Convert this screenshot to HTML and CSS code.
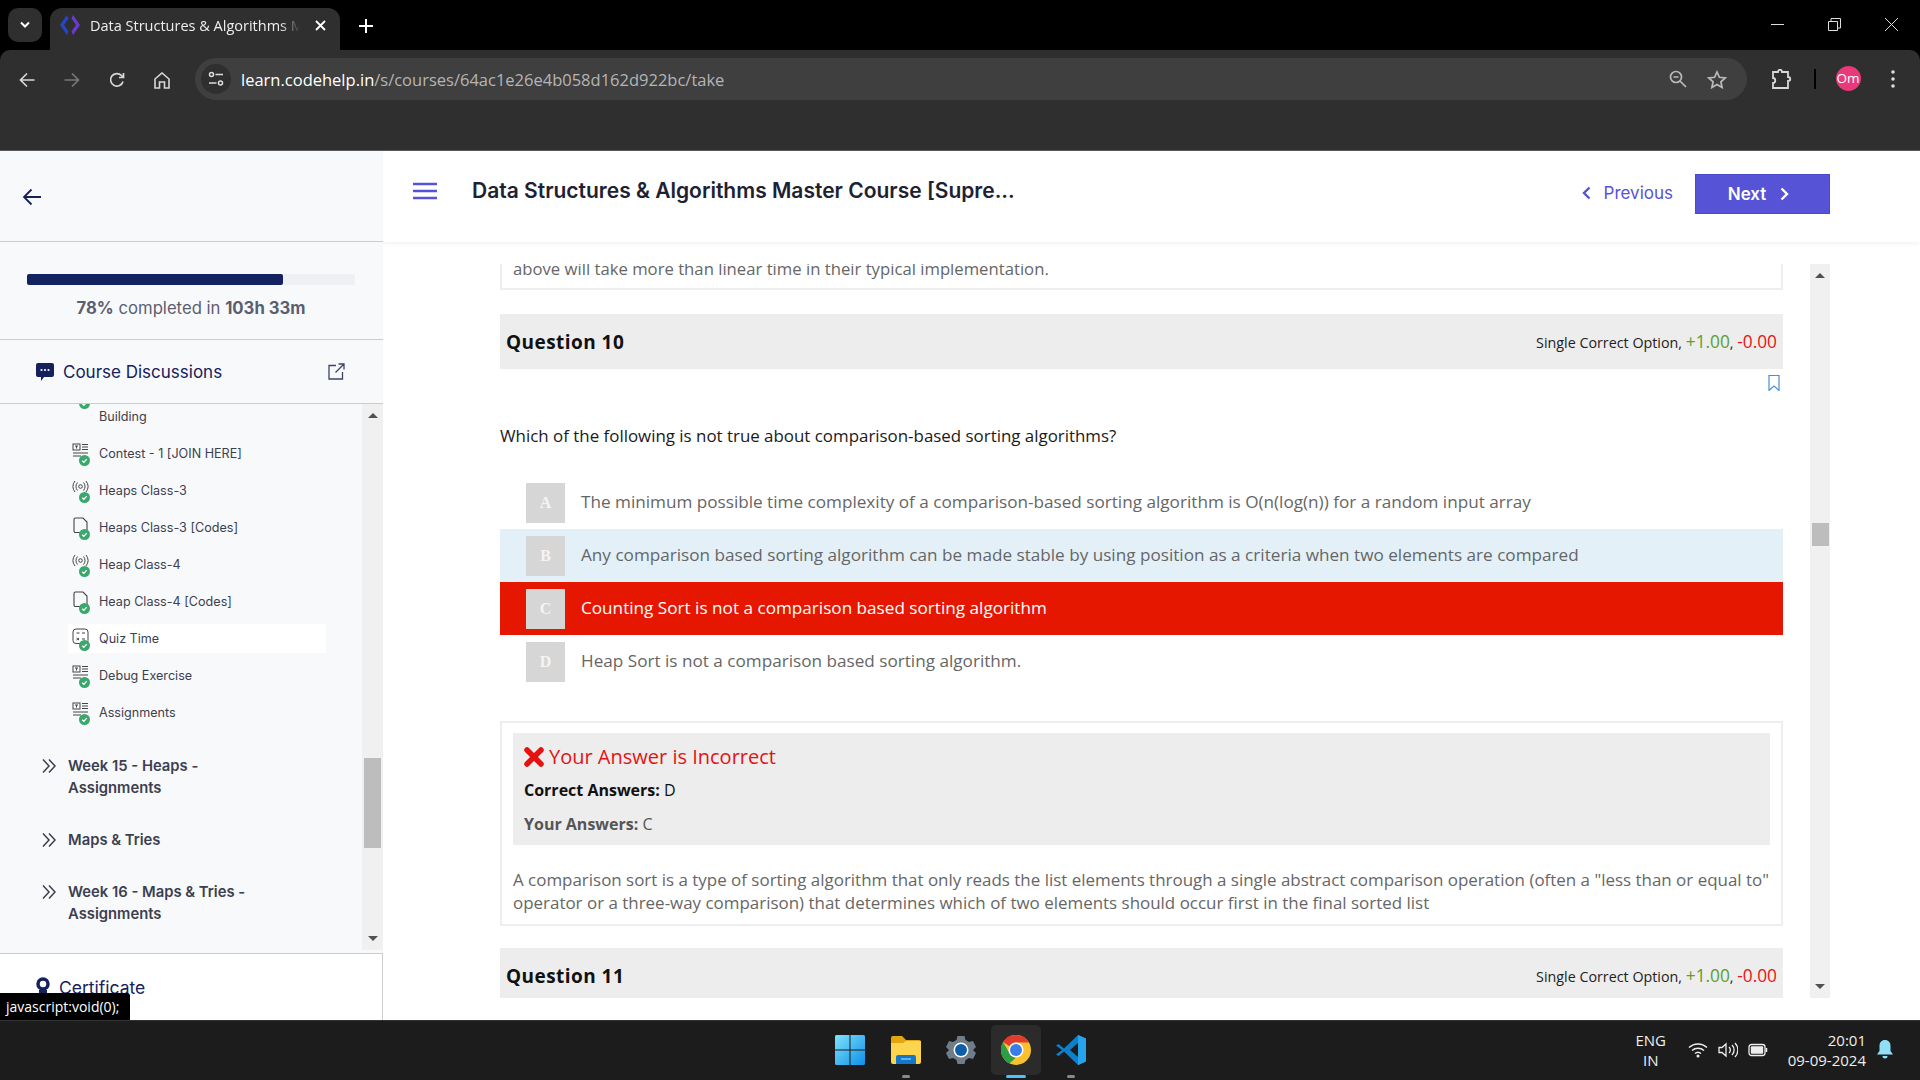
FILE: index.html
```html
<!DOCTYPE html>
<html lang="en">
<head>
    <meta charset="UTF-8">
    <title>Data Structures &amp; Algorithms Master Course</title>
    <link rel="stylesheet" href="styles.css">
</head>
<body>
    <svg class="defs" width="0" height="0">
        <symbol id="check" viewBox="0 0 12 12"><circle cx="6" cy="6" r="6" fill="#3aa76d"/><path d="M3.500 6.200l1.800 1.700 3.200-3.400" fill="none" stroke="#fff" stroke-width="1.400"/></symbol>
        <symbol id="i-exercise" viewBox="0 0 17 17"><g fill="none" stroke="#444" stroke-width="1"><rect x="1" y="1" width="7" height="6"/><path d="M3 3h3M4.500 3v2.500M10 1.500h6M10 4h6M10 6.500h6"/><path d="M1 10h15M1 13h8"/></g></symbol>
        <symbol id="i-live" viewBox="0 0 17 17"><g fill="none" stroke="#444" stroke-width="1"><circle cx="8.500" cy="6.500" r="1.800"/><path d="M5.500 2.500a6 6 0 0 0 0 8M11.500 2.500a6 6 0 0 1 0 8M3 1a9 9 0 0 0 0 11M14 1a9 9 0 0 1 0 11"/></g></symbol>
        <symbol id="i-doc" viewBox="0 0 17 17"><path d="M3.500 1h7.500l4 4v9a1.500 1.500 0 0 1-1.500 1.500h-10a1.500 1.500 0 0 1-1.500-1.500v-11.500a1.500 1.500 0 0 1 1.500-1.500z" fill="none" stroke="#444" stroke-width="1.100"/></symbol>
        <symbol id="i-quiz" viewBox="0 0 17 17"><g fill="none" stroke="#444" stroke-width="1"><rect x="1" y="1" width="15" height="14.500" rx="3"/><path d="M4.500 5h3M10 5h3M4.500 10l2.500 2M7 10l-2.500 2M10 11h3"/></g></symbol>
        <symbol id="i-chev" viewBox="0 0 14 14"><path d="M1 .5l6 6.500-6 6.500M7 .5l6 6.500-6 6.500" fill="none" stroke="#3c3f50" stroke-width="1.500"/></symbol>
    </svg>

    <header class="browser">
        <div class="tab-strip">
            <div class="tab-search"><svg width="12" height="8" viewBox="0 0 12 8"><path d="M2 1.500l4 4 4-4" fill="none" stroke="#fff" stroke-width="2"/></svg></div>
            <div class="tab">
                <svg class="favicon" width="20" height="20" viewBox="0 0 20 20"><path d="M7 0L0 10l7 10 1.500-3.500L4 10l4.500-6.500z" fill="#2447c8"/><path d="M13 0l7 10-7 10-1.500-3.500L16 10l-4.500-6.500z" fill="#6a3bd0"/></svg>
                <span class="tab-title">Data Structures &amp; Algorithms Master Course</span>
                <svg class="tab-close" width="11" height="11" viewBox="0 0 11 11"><path d="M1 1l9 9M10 1l-9 9" stroke="#fff" stroke-width="1.800"/></svg>
            </div>
            <svg class="tab-new" width="14" height="14" viewBox="0 0 14 14"><path d="M7 0v14M0 7h14" stroke="#fff" stroke-width="2"/></svg>
            <div class="window-controls">
                <svg width="13" height="13" viewBox="0 0 13 13"><path d="M0 6.500h13" stroke="#ddd"/></svg>
                <svg width="13" height="13" viewBox="0 0 13 13"><path d="M.5 3.500h9v9h-9zM3 3V.5h9.500V10H10" fill="none" stroke="#ddd"/></svg>
                <svg width="13" height="13" viewBox="0 0 13 13"><path d="M0 0l13 13M13 0L0 13" stroke="#ddd"/></svg>
            </div>
        </div>
        <div class="toolbar">
            <svg class="nav-icon" width="16" height="16" viewBox="0 0 16 16"><path d="M15.500 8H1.500M8 1.500L1.500 8 8 14.500" fill="none" stroke="#d8d8d8" stroke-width="1.700"/></svg>
            <svg class="nav-icon" width="16" height="16" viewBox="0 0 16 16"><path d="M.5 8h14M8 1.500L14.500 8 8 14.500" fill="none" stroke="#777" stroke-width="1.700"/></svg>
            <svg class="nav-icon" width="16" height="16" viewBox="0 0 16 16"><path d="M14 9.500A6.300 6.300 0 1 1 12.500 3.500L14.500 5.500M14.500 1v4.500H10" fill="none" stroke="#d8d8d8" stroke-width="1.700"/></svg>
            <svg class="nav-icon" width="16" height="17" viewBox="0 0 16 17"><path d="M1 7l7-6 7 6v9h-4.500v-6h-5v6H1z" fill="none" stroke="#d8d8d8" stroke-width="1.600"/></svg>
            <div class="omnibox">
                <div class="site-info"><svg width="16" height="16" viewBox="0 0 16 16"><g fill="none" stroke="#ddd" stroke-width="1.500"><circle cx="3.500" cy="3.500" r="2"/><path d="M7.500 3.500H15M1 12h7.500"/><circle cx="12.500" cy="12" r="2"/></g></svg></div>
                <span class="url"><span class="url-host">learn.codehelp.in</span>/s/courses/64ac1e26e4b058d162d922bc/take</span>
                <svg class="omni-icon" width="18" height="18" viewBox="0 0 18 18"><g fill="none" stroke="#bbb" stroke-width="1.700"><circle cx="7" cy="7" r="5.500"/><path d="M11 11l6 6M4.500 7h5"/></g></svg>
                <svg class="omni-icon" width="20" height="19" viewBox="0 0 20 19"><path d="M10 2l2.400 5.300 5.800.6-4.300 3.900 1.200 5.700-5.100-2.900-5.100 2.900 1.200-5.700L1.800 7.900l5.800-.6z" fill="none" stroke="#bbb" stroke-width="1.700"/></svg>
            </div>
            <svg class="puzzle" width="21" height="20" viewBox="0 0 21 20"><path d="M1 3h5c0-3 4-3 4 0h6v5c3 0 3 4 0 4v7H1v-5c3 0 3-5 0-5z" fill="none" stroke="#d8d8d8" stroke-width="1.800"/></svg>
            <span class="toolbar-sep"></span>
            <span class="avatar">Om</span>
            <svg class="kebab" width="4" height="18" viewBox="0 0 4 18"><circle cx="2" cy="2" r="1.800" fill="#ddd"/><circle cx="2" cy="9" r="1.800" fill="#ddd"/><circle cx="2" cy="16" r="1.800" fill="#ddd"/></svg>
        </div>
    </header>

    <div class="page">
        <aside class="sidebar">
            <div class="side-back">
                <svg width="20" height="18" viewBox="0 0 20 18"><path d="M19 9H2M9.500 1.500L2 9l7.500 7.500" fill="none" stroke="#14215c" stroke-width="1.800"/></svg>
            </div>
            <div class="side-progress">
                <div class="progress-track"><div class="progress-fill" style="width: 78%"></div></div>
                <p class="progress-text"><b>78%</b> completed in <b>103h 33m</b></p>
            </div>
            <div class="side-discuss">
                <svg width="18" height="18" viewBox="0 0 18 18"><path d="M2 0h14a2 2 0 0 1 2 2v10a2 2 0 0 1-2 2H8l-3 4v-4H2a2 2 0 0 1-2-2V2a2 2 0 0 1 2-2z" fill="#14215c"/><circle cx="5.500" cy="7" r="1.100" fill="#fff"/><circle cx="9" cy="7" r="1.100" fill="#fff"/><circle cx="12.500" cy="7" r="1.100" fill="#fff"/></svg>
                <span class="discuss-label">Course Discussions</span>
                <svg class="discuss-out" width="17" height="17" viewBox="0 0 17 17"><path d="M8 2.500H1v13.500h13.500V9M7.500 9.500L16 1M10.500 1H16v5.500" fill="none" stroke="#3c4468" stroke-width="1.300"/></svg>
            </div>
            <div class="side-list">
                <div class="lessons">
                    <ul class="lesson-list">
                        <li class="lesson lesson-clipped"><span class="lesson-icon"><svg class="badge"><use href="#check"/></svg></span>Building</li>
                        <li class="lesson"><span class="lesson-icon"><svg class="type"><use href="#i-exercise"/></svg><svg class="badge"><use href="#check"/></svg></span>Contest - 1 [JOIN HERE]</li>
                        <li class="lesson"><span class="lesson-icon"><svg class="type"><use href="#i-live"/></svg><svg class="badge"><use href="#check"/></svg></span>Heaps Class-3</li>
                        <li class="lesson"><span class="lesson-icon"><svg class="type"><use href="#i-doc"/></svg><svg class="badge"><use href="#check"/></svg></span>Heaps Class-3 [Codes]</li>
                        <li class="lesson"><span class="lesson-icon"><svg class="type"><use href="#i-live"/></svg><svg class="badge"><use href="#check"/></svg></span>Heap Class-4</li>
                        <li class="lesson"><span class="lesson-icon"><svg class="type"><use href="#i-doc"/></svg><svg class="badge"><use href="#check"/></svg></span>Heap Class-4 [Codes]</li>
                        <li class="lesson lesson-active"><span class="lesson-icon"><svg class="type"><use href="#i-quiz"/></svg><svg class="badge"><use href="#check"/></svg></span>Quiz Time</li>
                        <li class="lesson"><span class="lesson-icon"><svg class="type"><use href="#i-exercise"/></svg><svg class="badge"><use href="#check"/></svg></span>Debug Exercise</li>
                        <li class="lesson"><span class="lesson-icon"><svg class="type"><use href="#i-exercise"/></svg><svg class="badge"><use href="#check"/></svg></span>Assignments</li>
                    </ul>
                    <div class="week"><svg class="week-chev"><use href="#i-chev"/></svg><span>Week 15 - Heaps -<br>Assignments</span></div>
                    <div class="week"><svg class="week-chev"><use href="#i-chev"/></svg><span>Maps &amp; Tries</span></div>
                    <div class="week"><svg class="week-chev"><use href="#i-chev"/></svg><span>Week 16 - Maps &amp; Tries -<br>Assignments</span></div>
                </div>
                <div class="scrollbar scrollbar-side">
                    <span class="arrow arrow-up"></span>
                    <span class="thumb"></span>
                    <span class="arrow arrow-down"></span>
                </div>
            </div>
            <div class="side-cert">
                <svg width="14" height="18" viewBox="0 0 14 18"><circle cx="7" cy="7" r="5" fill="none" stroke="#14215c" stroke-width="3.500"/><path d="M3 13v5l4-2 4 2v-5z" fill="#14215c"/></svg>
                <span>Certificate</span>
            </div>
            <div class="status-tip">javascript:void(0);</div>
        </aside>

        <main class="main">
            <div class="topbar">
                <svg class="burger" width="24" height="18" viewBox="0 0 24 18"><path d="M0 2h24M0 9h24M0 16h24" stroke="#5653d6" stroke-width="2.600"/></svg>
                <h1 class="course-title">Data Structures &amp; Algorithms Master Course [Supre...</h1>
                <a class="btn-prev"><svg width="10" height="14" viewBox="0 0 10 14"><path d="M8.500 1.500L3 7l5.500 5.500" fill="none" stroke="#5653d6" stroke-width="2.400"/></svg>Previous</a>
                <a class="btn-next">Next<svg width="10" height="14" viewBox="0 0 10 14"><path d="M1.500 1.500L7 7l-5.500 5.500" fill="none" stroke="#fff" stroke-width="2.400"/></svg></a>
            </div>
            <div class="content">
                <div class="questions">
                    <div class="card card-prev">
                        <p>above will take more than linear time in their typical implementation.</p>
                    </div>

                    <div class="q-head">
                        <span class="q-name">Question 10</span>
                        <span class="q-meta">Single Correct Option, <span class="plus">+1.00</span>, <span class="minus">-0.00</span></span>
                    </div>
                    <div class="bookmark-row">
                        <svg width="12" height="16" viewBox="0 0 12 16"><path d="M1 .5h10v15l-5-4.500-5 4.500z" fill="none" stroke="#4a90d9" stroke-width="1.200"/></svg>
                    </div>
                    <p class="q-text">Which of the following is not true about comparison-based sorting algorithms?</p>

                    <div class="options">
                        <div class="option"><span class="letter">A</span>The minimum possible time complexity of a comparison-based sorting algorithm is O(n(log(n)) for a random input array</div>
                        <div class="option option-hover"><span class="letter">B</span>Any comparison based sorting algorithm can be made stable by using position as a criteria when two elements are compared</div>
                        <div class="option option-wrong"><span class="letter">C</span>Counting Sort is not a comparison based sorting algorithm</div>
                        <div class="option"><span class="letter">D</span>Heap Sort is not a comparison based sorting algorithm.</div>
                    </div>

                    <div class="card card-result">
                        <div class="verdict">
                            <div class="verdict-title">
                                <svg width="20" height="20" viewBox="0 0 20 20"><path d="M3 3l14 14M17 3L3 17" stroke="#e61212" stroke-width="5.500" stroke-linecap="round"/></svg>
                                Your Answer is Incorrect
                            </div>
                            <p class="verdict-line"><b>Correct Answers:</b> D</p>
                            <p class="verdict-line verdict-yours"><b>Your Answers:</b> C</p>
                        </div>
                        <p class="explain">A comparison sort is a type of sorting algorithm that only reads the list elements through a single abstract comparison operation (often a "less than or equal to" operator or a three-way comparison) that determines which of two elements should occur first in the final sorted list</p>
                    </div>

                    <div class="q-head q-head-next">
                        <span class="q-name">Question 11</span>
                        <span class="q-meta">Single Correct Option, <span class="plus">+1.00</span>, <span class="minus">-0.00</span></span>
                    </div>
                </div>
                <div class="scrollbar scrollbar-main">
                    <span class="arrow arrow-up"></span>
                    <span class="thumb"></span>
                    <span class="arrow arrow-down"></span>
                </div>
            </div>
        </main>
    </div>

    <footer class="taskbar">
        <div class="task-icons">
            <div class="task-item task-start">
                <svg width="30" height="30" viewBox="0 0 30 30"><defs><linearGradient id="win" x1="0" y1="0" x2="1" y2="1"><stop offset="0" stop-color="#7fe3fb"/><stop offset="1" stop-color="#0f8fe8"/></linearGradient></defs><path d="M0 1.500A1.500 1.500 0 0 1 1.500 0h13v14.500H0zM15.500 0h13A1.500 1.500 0 0 1 30 1.500v13H15.500zM0 15.500h14.500V30h-13A1.500 1.500 0 0 1 0 28.500zM15.500 15.500H30v13a1.500 1.500 0 0 1-1.500 1.500h-13z" fill="url(#win)"/></svg>
            </div>
            <div class="task-item task-open">
                <svg width="30" height="28" viewBox="0 0 30 28"><path d="M0 2a2 2 0 0 1 2-2h9l4 4h13a2 2 0 0 1 2 2v4H0z" fill="#e3a60f"/><path d="M0 7h12l3-2h15v21a2 2 0 0 1-2 2H2a2 2 0 0 1-2-2z" fill="#fdd44e"/><path d="M5 21a2 2 0 0 1 2-2h16a2 2 0 0 1 2 2v7H5z" fill="#1477c9"/><path d="M10 23h10" stroke="#7cc5f5" stroke-width="1.500"/></svg>
            </div>
            <div class="task-item">
                <svg width="30" height="30" viewBox="0 0 30 30"><path d="M11.500 1h7l1 4 3.500 2 4-1 3 6-3 3 3 3-3 6-4-1-3.500 2-1 4h-7l-1-4-3.500-2-4 1-3-6 3-3-3-3 3-6 4 1 3.500-2z" fill="#6f7c8a"/><circle cx="15" cy="15" r="7.500" fill="#fff"/><circle cx="15" cy="15" r="6" fill="#0d5ea8"/></svg>
            </div>
            <div class="task-item task-active">
                <svg width="30" height="30" viewBox="0 0 30 30"><circle cx="15" cy="15" r="15" fill="#fbc02d"/><path d="M15 0a15 15 0 0 1 13 7.500H15a7.500 7.500 0 0 0-6.500 3.750L2 7a15 15 0 0 1 13-7z" fill="#e33b2e"/><path d="M2 7l6.500 11.250A7.500 7.500 0 0 0 15 22.500L8.500 28.500A15 15 0 0 1 2 7z" fill="#2e9e46"/><circle cx="15" cy="15" r="7.500" fill="#fff"/><circle cx="15" cy="15" r="6" fill="#3b7de8"/></svg>
            </div>
            <div class="task-item task-open">
                <svg width="30" height="30" viewBox="0 0 30 30"><path d="M22 0l8 3.500v23L22 30 8 16.500 2.500 21 0 19.500 6 15 0 10.500 2.500 9 8 13.500z" fill="#0f7fcb"/><path d="M22 0l8 3.500v23L22 30z" fill="#27a3ee"/><path d="M22 8l-8 7 8 7z" fill="#1c1c1c"/></svg>
            </div>
        </div>
        <div class="tray">
            <div class="tray-lang">ENG<br>IN</div>
            <svg width="20" height="16" viewBox="0 0 20 16"><g fill="none" stroke="#eee" stroke-width="1.500"><path d="M1 5.500a13 13 0 0 1 18 0M4 8.500a9 9 0 0 1 12 0M7 11.500a4.500 4.500 0 0 1 6 0"/></g><circle cx="10" cy="14" r="1.500" fill="#eee"/></svg>
            <svg width="20" height="16" viewBox="0 0 20 16"><g fill="none" stroke="#eee" stroke-width="1.300"><path d="M1 5.500h3l4-3.500v12l-4-3.500H1z"/><path d="M11 5a4 4 0 0 1 0 6M14 3a7 7 0 0 1 0 10M17 1a10 10 0 0 1 0 14"/></g></svg>
            <svg width="20" height="14" viewBox="0 0 20 14"><rect x="1" y="1.500" width="16" height="11" rx="2.500" fill="none" stroke="#eee" stroke-width="1.300"/><rect x="2.800" y="3.300" width="12.400" height="7.400" rx="1" fill="#eee"/><path d="M18.500 5v4" stroke="#eee" stroke-width="1.500"/></svg>
            <div class="tray-clock">20:01<br>09-09-2024</div>
            <svg class="bell" width="16" height="20" viewBox="0 0 16 20"><path d="M8 0c3.500 0 5.500 2.500 5.500 6v5l2.500 3.500H0L2.500 11V6C2.500 2.500 4.500 0 8 0z" fill="#8fe0f7"/><path d="M5.500 16h5a2.500 2.500 0 0 1-5 0z" fill="#8fe0f7"/></svg>
        </div>
    </footer>
</body>
</html>
```

FILE: styles.css
```css
* {
    margin: 0;
    padding: 0;
    box-sizing: border-box;
}

body {
    width: 1920px;
    height: 1080px;
    overflow: hidden;
    display: flex;
    flex-direction: column;
    font-family: 'Open Sans', sans-serif;
    background-color: #fff;
}

.defs {
    position: absolute;
}

/* browser chrome */
.browser {
    height: 151px;
    background-color: #000;
    flex-shrink: 0;
}

.tab-strip {
    height: 50px;
    display: flex;
    padding-top: 8px;
    position: relative;
}

.tab-search {
    width: 34px;
    height: 34px;
    margin-left: 8px;
    border-radius: 10px;
    background-color: #2f2f2f;
    display: flex;
    align-items: center;
    justify-content: center;
}

.tab {
    width: 290px;
    height: 42px;
    margin-left: 8px;
    padding: 0 9px 8px 10px;
    background-color: #2f2f2f;
    border-radius: 12px 12px 0 0;
    display: flex;
    align-items: center;
}

.favicon {
    flex-shrink: 0;
}

.tab-title {
    width: 210px;
    margin-left: 10px;
    overflow: hidden;
    white-space: nowrap;
    color: #eee;
    font-size: 14.500px;
    -webkit-mask-image: linear-gradient(to right, #000 190px, transparent 210px);
    mask-image: linear-gradient(to right, #000 190px, transparent 210px);
}

.tab-close {
    margin-left: 15px;
    flex-shrink: 0;
}

.tab-new {
    margin: 11px 0 0 19px;
}

.window-controls {
    margin-left: auto;
    display: flex;
    gap: 44px;
    padding: 10px 22px 0 0;
    height: 34px;
}

.toolbar {
    height: 101px;
    background-color: #2f2f2f;
    border-bottom: 1px solid #5a5a5a;
    border-radius: 10px 10px 0 0;
    padding: 8px 0 0 19px;
    display: flex;
    align-items: flex-start;
}

.nav-icon {
    margin: 14px 29px 0 0;
    flex-shrink: 0;
}

.omnibox {
    width: 1552px;
    height: 42px;
    margin-left: -4px;
    border-radius: 21px;
    background-color: #3f3f3f;
    display: flex;
    align-items: center;
    padding-left: 6px;
}

.site-info {
    width: 30px;
    height: 30px;
    border-radius: 50%;
    background-color: #2f2f2f;
    display: flex;
    align-items: center;
    justify-content: center;
    flex-shrink: 0;
}

.url {
    margin-left: 10px;
    font-size: 16.500px;
    color: #b5b5b5;
    flex-grow: 1;
}

.url-host {
    color: #fff;
}

.omni-icon {
    margin-right: 20px;
    flex-shrink: 0;
}

.puzzle {
    margin: 11px 0 0 24.500px;
}

.toolbar-sep {
    width: 2px;
    height: 20px;
    margin: 11px 0 0 21px;
    background-color: #000;
}

.avatar {
    width: 25px;
    height: 25px;
    margin: 8px 0 0 20px;
    border-radius: 50%;
    background-color: #e8397a;
    color: #fff;
    font-size: 13.500px;
    line-height: 25px;
    text-align: center;
}

.kebab {
    margin: 12px 0 0 30px;
}

/* page */
.page {
    flex-grow: 1;
    min-height: 0;
    display: flex;
}

.sidebar {
    width: 383px;
    flex-shrink: 0;
    display: flex;
    flex-direction: column;
    background-color: #f8f9fb;
    position: relative;
    font-family: 'Inter', sans-serif;
}

.side-back {
    height: 91px;
    padding: 37px 0 0 22px;
    border-bottom: 1px solid #ccc;
}

.side-progress {
    height: 98px;
    padding: 32px 28px 0 27px;
    border-bottom: 1px solid #ccc;
}

.progress-track {
    height: 11px;
    border-radius: 2px;
    background-color: #eff0f4;
}

.progress-fill {
    height: 100%;
    border-radius: 2px;
    background-color: #14235f;
}

.progress-text {
    margin-top: 13px;
    text-align: center;
    font-size: 16.700px;
    color: #5a5f70;
}

.side-discuss {
    height: 64px;
    padding: 0 38px 0 36px;
    border-bottom: 1px solid #ccc;
    display: flex;
    align-items: center;
    color: #14215c;
    font-size: 17px;
}

.discuss-label {
    margin-left: 9px;
}

.discuss-out {
    margin-left: auto;
}

.side-list {
    height: 546px;
    display: flex;
    overflow: hidden;
}

.lessons {
    width: 362px;
    overflow: hidden;
}

.lesson-list {
    list-style-type: none;
    margin-top: -2px;
    margin-bottom: 27.500px;
}

.lesson {
    width: 258px;
    height: 29px;
    margin: 0 0 8px 68px;
    padding-left: 31px;
    display: flex;
    align-items: center;
    font-size: 12.600px;
    color: #3c3f50;
    position: relative;
}

.lesson-active {
    background-color: #fff;
}

.lesson-icon {
    position: absolute;
    left: 4px;
    top: 4px;
    width: 18px;
    height: 24px;
}

.lesson-icon .type {
    width: 17px;
    height: 17px;
    display: block;
}

.lesson-icon .badge {
    position: absolute;
    left: 7px;
    top: 12px;
    width: 11px;
    height: 11px;
}

.lesson-clipped .badge {
    top: -8px;
}

.week {
    margin-left: 42px;
    margin-bottom: 30px;
    display: flex;
    font-size: 14.800px;
    font-weight: 600;
    line-height: 22px;
    color: #3c3f50;
}

.week-chev {
    width: 14px;
    height: 14px;
    margin: 4px 12px 0 0;
    flex-shrink: 0;
}

.scrollbar {
    width: 20px;
    display: flex;
    flex-direction: column;
    align-items: center;
    background-color: #f0f0f0;
    position: relative;
    flex-shrink: 0;
}

.arrow {
    width: 0;
    height: 0;
    border-left: 5px solid transparent;
    border-right: 5px solid transparent;
    flex-shrink: 0;
}

.arrow-up {
    border-bottom: 5px solid #505050;
    margin-top: 9px;
}

.arrow-down {
    border-top: 5px solid #505050;
    margin-top: auto;
    margin-bottom: 9px;
}

.thumb {
    width: 17px;
    background-color: #bdbdbd;
}

.scrollbar-side {
    width: 21px;
}

.scrollbar-side .thumb {
    height: 90px;
    margin-top: 340px;
}

.side-cert {
    flex-grow: 1;
    margin-top: 3px;
    background-color: #fff;
    border-top: 1px solid #ccc;
    border-right: 1px solid #ccc;
    padding: 23px 0 0 36px;
    display: flex;
    align-items: flex-start;
    gap: 9px;
    color: #14215c;
    font-size: 17.500px;
}

.status-tip {
    position: absolute;
    left: 0;
    bottom: 0;
    height: 27px;
    width: 130px;
    padding-left: 6px;
    background-color: #000;
    color: #fff;
    font-size: 14px;
    line-height: 27px;
    font-family: 'Open Sans', sans-serif;
    border-radius: 0 3px 0 0;
}

/* main column */
.main {
    flex-grow: 1;
    min-width: 0;
    display: flex;
    flex-direction: column;
}

.topbar {
    height: 91px;
    flex-shrink: 0;
    padding: 0 90px 5px 30px;
    display: flex;
    align-items: center;
    box-shadow: 0 2px 4px rgba(0, 0, 0, 0.05);
}

.burger {
    flex-shrink: 0;
    margin-top: -6px;
}

.course-title {
    margin-left: 35px;
    font-family: 'Inter', sans-serif;
    font-size: 21px;
    font-weight: 600;
    color: #1d2233;
    flex-grow: 1;
    margin-top: -8px;
}

.btn-prev,
.btn-next {
    font-family: 'Inter', sans-serif;
    font-size: 17px;
    display: flex;
    align-items: center;
}

.btn-prev {
    color: #5653d6;
    gap: 13px;
    margin-right: 22px;
    margin-top: -2px;
}

.btn-next {
    width: 135px;
    height: 40px;
    padding-right: 7px;
    justify-content: center;
    gap: 14px;
    background-color: #5653d6;
    border: 1px solid #4c49cc;
    color: #fff;
    font-weight: 600;
}

.content {
    flex-grow: 1;
    min-height: 0;
    padding: 22px 90px 22px 117px;
    display: flex;
    gap: 27px;
}

.questions {
    width: 1283px;
    overflow: hidden;
}

.card {
    border: 2px solid #eee;
}

.card-prev {
    margin-top: -12px;
    height: 38px;
    border-top: none;
    padding: 7px 0 0 11px;
    font-size: 16.700px;
    line-height: 20px;
    color: #666;
}

.q-head {
    height: 55px;
    margin-top: 24px;
    padding: 0 6px;
    background-color: #ededed;
    display: flex;
    align-items: center;
    justify-content: space-between;
}

.q-head-next {
    margin-top: 22px;
}

.q-name {
    font-size: 19px;
    font-weight: 700;
    letter-spacing: 0.450px;
    color: #111;
}

.q-meta {
    font-size: 14.300px;
    color: #222;
}

.plus,
.minus {
    font-size: 17.300px;
}

.plus {
    color: #5aa02c;
}

.minus {
    color: #ee1111;
}

.bookmark-row {
    height: 22px;
    padding: 6px 3px 0 0;
    display: flex;
    justify-content: flex-end;
}

.q-text {
    margin-top: 33px;
    font-size: 16.900px;
    line-height: 24px;
    color: #1a1a1a;
}

.options {
    margin-top: 28px;
}

.option {
    height: 53px;
    padding: 0 0 2px 26px;
    display: flex;
    align-items: center;
    font-size: 17.150px;
    color: #666;
}

.option-hover {
    background-color: #e3f0f8;
}

.option-wrong {
    background-color: #e61700;
    color: #fff;
}

.letter {
    width: 39px;
    height: 40px;
    margin: 2px 16px 0 0;
    background-color: #d6d6d6;
    color: #f4f4f4;
    font-family: 'Liberation Serif', serif;
    font-size: 16px;
    font-weight: 700;
    line-height: 40px;
    text-align: center;
    flex-shrink: 0;
}

.card-result {
    margin-top: 33px;
    height: 205px;
    padding: 10px 11px 0;
}

.verdict {
    height: 112px;
    padding: 9px 11px 0;
    background-color: #ededed;
}

.verdict-title {
    display: flex;
    align-items: center;
    gap: 5px;
    font-size: 20px;
    line-height: 30px;
    color: #e61212;
}

.verdict-line {
    margin-top: 5px;
    font-size: 16px;
    line-height: 26px;
    color: #111;
}

.verdict-yours {
    margin-top: 8px;
    color: #555;
}

.explain {
    margin-top: 23px;
    font-size: 16.950px;
    line-height: 23px;
    color: #666;
}

.scrollbar-main .thumb {
    height: 23px;
    margin-top: 245px;
}

/* taskbar */
.taskbar {
    height: 60px;
    flex-shrink: 0;
    background-color: #1c1c1c;
    border-top: 1px solid #333;
    position: relative;
    display: flex;
    justify-content: flex-end;
    color: #eee;
}

.task-icons {
    position: absolute;
    left: 826px;
    top: 4px;
    display: flex;
    gap: 5px;
}

.task-item {
    width: 50px;
    height: 50px;
    display: flex;
    align-items: center;
    justify-content: center;
    border-radius: 5px;
    position: relative;
}

.task-start svg {
    margin-left: -2px;
}

.task-open::after,
.task-active::after {
    content: "";
    position: absolute;
    bottom: -3px;
    height: 3px;
    border-radius: 2px;
}

.task-open::after {
    width: 8px;
    left: 21px;
    background-color: #8a8a8a;
}

.task-active {
    background-color: #2b2b2b;
}

.task-active::after {
    width: 20px;
    left: 15px;
    background-color: #4cc2ff;
}

.tray {
    display: flex;
    align-items: center;
    padding: 0 27px 2px 0;
    gap: 10px;
}

.tray-lang {
    width: 50px;
    margin-right: 2px;
    text-align: center;
    font-size: 15px;
    line-height: 20px;
}

.tray-clock {
    margin-left: 10px;
    text-align: right;
    font-size: 15px;
    line-height: 20px;
}

.bell {
    margin-left: 1px;
}
```
